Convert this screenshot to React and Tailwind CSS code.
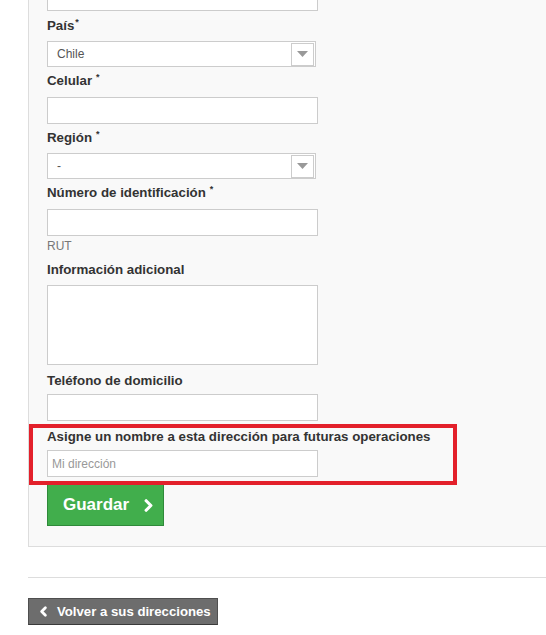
import { ChevronLeft, ChevronRight } from "lucide-react";

const font = { fontFamily: '"Liberation Sans", Arial, sans-serif' };

function Label({ children, req, space = true, className = "" }) {
  return (
    <div className={`h-4 leading-[18px] text-[13.3px] font-bold text-[#333] whitespace-nowrap ${className}`}>
      {children}
      {req && (
        <span className={`relative top-[-5px] text-[9px] font-bold ${space ? "ml-[4px]" : "ml-[1px]"}`}>
          *
        </span>
      )}
    </div>
  );
}

function Input({ className = "", placeholder }) {
  return (
    <div
      className={`h-[27px] w-[271px] border border-[#ccc] bg-white flex items-center pl-[4px] text-[12px] text-[#999] ${className}`}
    >
      {placeholder}
    </div>
  );
}

function Select({ value, className = "" }) {
  return (
    <div
      className={`h-[26px] w-[269px] border border-[#ccc] bg-white flex items-center justify-between pl-[9px] pr-[1px] ${className}`}
    >
      <span className="text-[12px] text-[#555]">{value}</span>
      <div className="h-[23px] w-[23px] border border-[#ccc] flex items-center justify-center">
        <svg width="11" height="6" viewBox="0 0 11 6">
          <path d="M0 0h11L5.5 6z" fill="#999" />
        </svg>
      </div>
    </div>
  );
}

export default function App() {
  return (
    <div className="w-[546px] h-[635px] bg-white overflow-hidden" style={font}>
      {/* form panel */}
      <div className="ml-[28px] border-l border-b border-[#ddd] bg-[#f9f9f9] pl-[18px] pb-[20px] flex flex-col items-start">
        <Input className="mt-[-16px]" />
        <Label req space={false} className="mt-[6px]">País</Label>
        <Select value="Chile" className="mt-[8px]" />
        <Label req className="mt-[5px]">Celular</Label>
        <Input className="mt-[9px]" />
        <Label req className="mt-[5px]">Región</Label>
        <Select value="-" className="mt-[8px]" />
        <Label req className="mt-[5px]">Número de identificación</Label>
        <Input className="mt-[9px]" />
        <div className="mt-[1px] h-4 leading-[18px] text-[12px] text-[#777]">RUT</div>
        <Label className="mt-[8px]">Información adicional</Label>
        <div className="mt-[8px] h-[80px] w-[271px] border border-[#ccc] bg-white" />
        <Label className="mt-[7px]">Teléfono de domicilio</Label>
        <Input className="mt-[6px]" />

        {/* highlighted field */}
        <div className="mt-[3px] ml-[-18px] w-[428px] border-4 border-[#e3202b] pl-[14px] pb-[4px]">
          <Label>Asigne un nombre a esta dirección para futuras operaciones</Label>
          <Input className="mt-[6px]" placeholder="Mi dirección" />
        </div>

        <button className="h-[41px] w-[117px] bg-[#41ae4c] border border-[#2f8a3a] border-t-0 flex items-center pl-[15px] gap-[10px] text-white text-[17px] font-bold">
          Guardar
          <ChevronRight size={19} strokeWidth={4} />
        </button>
      </div>

      <div className="ml-[28px] mt-[30px] border-t border-[#ddd]" />

      <button className="ml-[28px] mt-[20px] h-[27px] w-[190px] bg-[#6d6d6d] border border-[#4f4f4f] border-b-[#3a3a3a] flex items-center pl-[7px] gap-[6px] text-white text-[13.2px] font-bold whitespace-nowrap">
        <ChevronLeft size={15} strokeWidth={4.5} />
        Volver a sus direcciones
      </button>
    </div>
  );
}
